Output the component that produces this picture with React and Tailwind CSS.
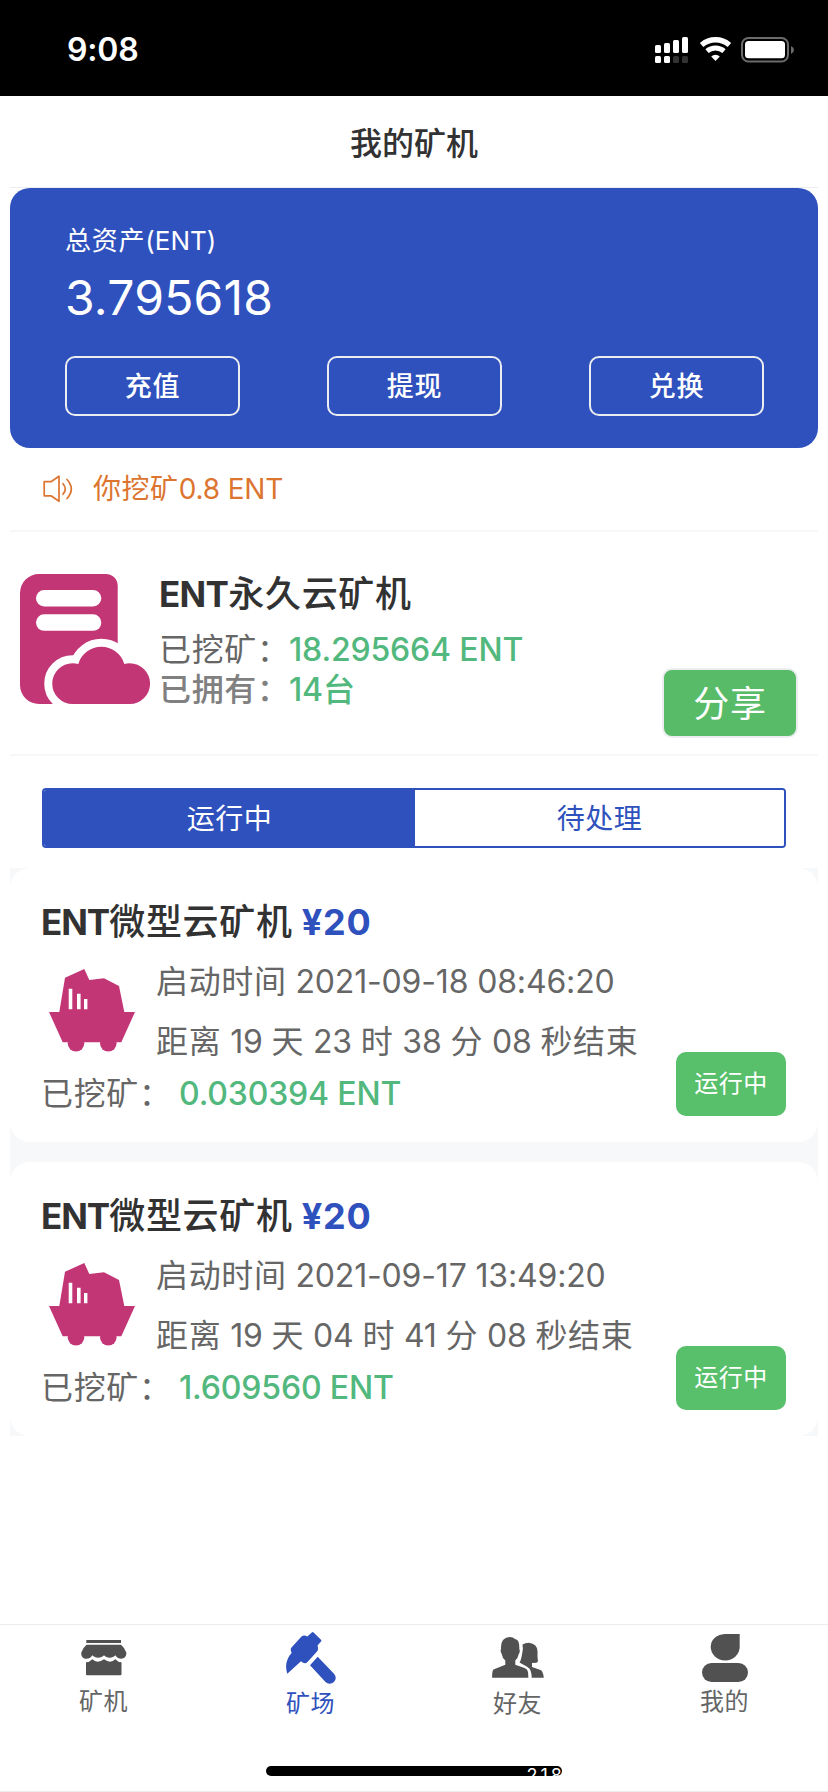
import React, { useState } from 'react';

const miners = [
  {
    id: 1,
    name: '微型云矿机',
    price: 20,
    startedAt: '2021-09-18 08:46:20',
    left: ['19', '23', '38', '08'],
    mined: '0.030394',
  },
  {
    id: 2,
    name: '微型云矿机',
    price: 20,
    startedAt: '2021-09-17 13:49:20',
    left: ['19', '04', '41', '08'],
    mined: '1.609560',
  },
];

// Chinese text is set slightly wider than the latin text next to it
const Zh = ({ children, className = '' }) => (
  <span className={`tracking-[0.02em] ${className}`}>{children}</span>
);

const StatusIcons = () => (
  <svg width="140" height="27" viewBox="0 0 140 27" fill="#fff">
    <rect x="0" y="8" width="6" height="8" rx="1.5" />
    <rect x="9" y="6" width="6" height="10" rx="1.5" />
    <rect x="18" y="3" width="6" height="13" rx="1.5" />
    <rect x="27" y="0" width="6" height="16" rx="1.5" />
    <rect x="0" y="19" width="6" height="7" rx="1.5" />
    <rect x="9" y="19" width="6" height="7" rx="1.5" />
    <rect x="18" y="19" width="6" height="7" rx="1.5" fill="#333" />
    <rect x="27" y="19" width="6" height="7" rx="1.5" fill="#333" />
    <path d="M46.6 8A21.2 21.2 0 0 1 74.4 8" fill="none" stroke="#fff" strokeWidth="5.4" />
    <path d="M52 14.2A13 13 0 0 1 69 14.2" fill="none" stroke="#fff" strokeWidth="5" />
    <path d="M60.5 24L56.2 19.4A6.3 6.3 0 0 1 64.8 19.4Z" />
    <rect x="87" y="1" width="46" height="23.5" rx="6.5" fill="none" stroke="#6b6b6b" strokeWidth="2" />
    <rect x="90" y="4" width="40" height="17.3" rx="3.5" />
    <path d="M136 9q3 1.5 3 4t-3 4z" fill="#6b6b6b" />
  </svg>
);

const SpeakerIcon = () => (
  <svg width="30" height="28" viewBox="0 0 30 28" fill="none" stroke="#dc7530" strokeWidth="1.7" strokeLinejoin="round" strokeLinecap="round">
    <path d="M1.2 6.7H8L16 1.2V26.3L8 20.8H1.2Z" />
    <path d="M20 8.7q4.6 5.3 0 10.6M24 4.5q8.6 9.5 0 19" />
  </svg>
);

const CloudServerIcon = () => (
  <svg width="130" height="130" viewBox="0 0 130 130" fill="#c33676">
    <path d="M19 0H86a11.7 11.7 0 0 1 11.7 12V130H19A19 19 0 0 1 0 111V19A19 19 0 0 1 19 0Z" />
    <rect x="16" y="16" width="65.3" height="16.5" rx="8.2" fill="#fff" />
    <rect x="16" y="40.3" width="65.3" height="16.5" rx="8.2" fill="#fff" />
    <path
      d="M52.6 130A20.3 20.3 0 0 1 52.6 89.3Q55.5 89.3 58.3 90A24 24 0 0 1 104.3 90Q107 89.3 109.7 89.3A20.3 20.3 0 0 1 109.7 130Z"
      stroke="#fff"
      strokeWidth="16"
    />
    <path d="M52.6 130A20.3 20.3 0 0 1 52.6 89.3Q55.5 89.3 58.3 90A24 24 0 0 1 104.3 90Q107 89.3 109.7 89.3A20.3 20.3 0 0 1 109.7 130Z" />
  </svg>
);

const MineCartIcon = () => (
  <svg width="86" height="83" viewBox="0 0 86 83" fill="#c33676">
    <path d="M35.3 0L40.3 11L55 9.3L70 17L75.3 43H86L72.3 73.3H13.7L0 43H10.3L16 8.7Z" />
    <circle cx="27" cy="74.3" r="8.3" />
    <circle cx="59.3" cy="74.3" r="8.3" />
    <path d="M19.7 19.7h3.6v20.6h-3.6zM28 24.7h3.6v15.6H28zM35 30h3.4v10.3H35z" fill="#fff" />
  </svg>
);

const StoreIcon = () => (
  <svg width="46" height="36" viewBox="0 0 46 36" fill="currentColor">
    <path d="M5.3 0H40V3H5.3z" />
    <path d="M5.5 4.7H40Q43 7 45.300 12.500C46 20 37.500 20.500 34.300 15.200C32 18.500 25.500 18.500 23 15.200C20.500 18.500 14 18.500 11.300 15.200C8.500 20.500 -.5 20 .3 12.500Q2.500 7 5.500 4.700Z" />
    <path d="M5 22.300Q8.500 22.300 11.300 19.300Q16.500 24 23 19.300Q29.500 24 34.300 19.300Q37 22.300 40.500 22.300V34.300a1 1 0 0 1-1 1H6a1 1 0 0 1-1-1z" />
  </svg>
);

const PickaxeIcon = () => (
  <svg width="50" height="52" viewBox="0 0 50 52" fill="currentColor">
    <path d="M25.800 0.600Q26.700-.4 27.600 0.600L35 7.800Q35.800 8.700 35 9.600L31.500 13.500Q32.800 17.500 31 19.500L21 30.500Q18.500 32.500 15 29.300L1.300 41.700Q-2.500 30 5.700 20.700Q3.800 17.500 5.500 15.500L15.500 4.500Q18 2.500 21.300 4.500Z" />
    <path d="M31.700 24.700L48 41.700A5.900 5.900 0 0 1 39.500 50L24 33.300Z" />
  </svg>
);

const FriendsIcon = () => (
  <svg width="52" height="41" viewBox="0 0 52 41" fill="currentColor">
    <path d="M18 0Q21 0 23 2Q27.700 2.500 27.300 12Q28.500 14.500 26.800 17Q26 21 23.300 23.500V27.700L32.500 31Q35.600 32 36 35L36.400 40.700H.1Q0 34 1.500 32.500L13.300 27.700V23.500Q10.300 21 9.700 17Q8 14.500 9 12Q8.300 0.500 18 0Z" />
    <path d="M30.500 7.500Q33 5.700 37 5.700Q45 6.700 45.500 14Q45.300 20 46 24.500L44.500 25.700L40 26V30L48.500 33Q51 34 51.800 40.700H39.700Q39.500 34 37.300 31.500Q35 29.500 31.500 27.800L27.500 25.500Q29 23.500 30 17.500Q31.600 12 30.500 7.500Z" />
  </svg>
);

const MeIcon = () => (
  <svg width="46" height="48" viewBox="0 0 46 48" fill="currentColor">
    <path d="M23 0H37.700V12.700A14.500 13.700 0 0 1 8.700 12.700Q9.200 1.500 23 0Z" />
    <rect x="0" y="29" width="46" height="19" rx="9.500" />
  </svg>
);

const tabs = [
  { label: '矿机', Icon: StoreIcon, iconBox: 'pt-[15px] h-[61px]' },
  { label: '矿场', Icon: PickaxeIcon, iconBox: 'pt-[7px] h-[63px]', active: true },
  { label: '好友', Icon: FriendsIcon, iconBox: 'pt-[12px] h-[63px]' },
  { label: '我的', Icon: MeIcon, iconBox: 'pt-[9px] h-[61px]' },
];

const MinerCard = ({ miner }) => {
  const [d, h, m, s] = miner.left;
  return (
    <div className="h-[274px] rounded-[20px] bg-white pl-[31px] pr-8 pt-[33px] flex justify-between text-[#666]">
      <div className="text-[32px] whitespace-nowrap">
        <h3 className="text-[36px] leading-[42px] font-bold text-[#323233]">
          <span className="text-[35px] tracking-[-0.03em]">ENT</span>
          <Zh className="font-medium">{miner.name}</Zh>
          <span className="ml-[9px] tracking-[0.02em] text-[#2f51bd]">¥{miner.price}</span>
        </h3>
        <div className="flex">
          <div className="w-[115px] pt-[26px] pl-2">
            <MineCartIcon />
          </div>
          <div className="pt-[9px] leading-[60px]">
            <p><Zh>启动时间</Zh> {miner.startedAt}</p>
            <p>
              <Zh>距离</Zh> {d} <Zh>天</Zh> {h} <Zh>时</Zh> {m} <Zh>分</Zh> {s} <Zh>秒结束</Zh>
            </p>
          </div>
        </div>
        <div className="flex leading-[44px]">
          <Zh className="w-[138px]">已挖矿：</Zh>
          <span className="font-medium text-[#52b87d]">{miner.mined} ENT</span>
        </div>
      </div>
      <button className="mt-[151px] h-16 w-[110px] rounded-[10px] bg-[#58bf6b] text-2xl text-white">
        <Zh>运行中</Zh>
      </button>
    </div>
  );
};

const App = () => {
  const [tab, setTab] = useState('running');
  const tabClass = (name) =>
    tab === name ? 'bg-[#2f51bd] text-white' : 'bg-white text-[#2f51bd]';

  return (
    <div className="w-[828px] h-[1792px] flex flex-col overflow-hidden bg-white font-['Inter','Noto_Sans_CJK_SC',sans-serif] tracking-[-0.01em] text-[#323233]">
      {/* Status bar */}
      <div className="h-24 shrink-0 bg-black text-white flex items-start justify-between pl-[67px] pr-[33px]">
        <span className="pt-[30px] text-[32px] leading-10 font-semibold">9:08</span>
        <div className="pt-[37px]">
          <StatusIcons />
        </div>
      </div>

      <div className="flex-1 px-2.5">
        <header className="h-[92px] border-b border-[#ebedf0] flex items-center justify-center text-[32px] font-medium pt-1">
          <Zh className="tracking-normal">我的矿机</Zh>
        </header>

        {/* Assets */}
        <section className="h-[260px] rounded-[20px] bg-[#2f51bd] text-white px-[55px] pt-[37px]">
          <p className="text-[26px] leading-8"><Zh className="tracking-[0.03em]">总资产</Zh><span className="tracking-normal">(ENT)</span></p>
          <p className="mt-[13px] text-[48px] leading-[56px] tracking-[0.005em]">3.795618</p>
          <div className="mt-[30px] flex justify-between w-[699px]">
            {['充值', '提现', '兑换'].map((label) => (
              <button key={label} className="h-[60px] w-[175px] rounded-[10px] border-2 border-[#ebedf0] pt-0.5 text-[27px] font-medium">
                <Zh className="tracking-[0.03em]">{label}</Zh>
              </button>
            ))}
          </div>
        </section>

        {/* Notice */}
        <div className="h-[84px] border-b-2 border-[#f7f7f9] pl-[33px] flex items-center gap-5 text-[28px] text-[#dc7530]">
          <SpeakerIcon />
          <p><Zh>你挖矿</Zh>0.8 ENT</p>
        </div>

        {/* Permanent miner */}
        <section className="h-[224px] border-b-2 border-[#f7f7f9] pl-2.5 pr-5 flex">
          <div className="pt-[42px]">
            <CloudServerIcon />
          </div>
          <div className="ml-[9px] pt-[41px] flex-1 text-[32px] leading-10 whitespace-nowrap">
            <h2 className="text-[36px] leading-[42px] font-bold">
              <span className="text-[35px] tracking-[-0.02em]">ENT</span>
              <Zh className="font-medium">永久云矿机</Zh>
            </h2>
            <div className="mt-[15px] flex text-[#666]">
              <Zh className="w-[130px]">已挖矿：</Zh>
              <span className="font-medium text-[#52b87d] tracking-[-0.005em]">18.295664 ENT</span>
            </div>
            <div className="flex text-[#808080] font-medium">
              <Zh className="w-[130px]">已拥有：</Zh>
              <span className="text-[#52b87d]">14<Zh>台</Zh></span>
            </div>
          </div>
          <button className="mt-[136px] h-[70px] w-[136px] rounded-[10px] border-2 border-[#ebedf0] bg-[#57bb68] pt-0.5 text-[36px] text-white">
            <Zh>分享</Zh>
          </button>
        </section>

        <div className="mt-8 mx-8 h-[60px] flex overflow-hidden rounded-[4px] border-2 border-[#2f51bd] text-[28px]">
          <button className={`w-[371px] pt-0.5 ${tabClass('running')}`} onClick={() => setTab('running')}><Zh>运行中</Zh></button>
          <button className={`flex-1 pt-0.5 ${tabClass('pending')}`} onClick={() => setTab('pending')}><Zh>待处理</Zh></button>
        </div>

        <div className="mt-5 flex flex-col gap-5 bg-[#f7f8fa]">
          {miners.map((miner) => (
            <MinerCard key={miner.id} miner={miner} />
          ))}
        </div>
      </div>

      {/* Bottom navigation */}
      <nav className="h-[168px] shrink-0 border-y border-[#ebedf0] flex flex-col items-center">
        <div className="flex w-full h-[141px]">
          {tabs.map(({ label, Icon, iconBox, active }) => (
            <div key={label} className={`flex-1 flex flex-col items-center text-2xl leading-8 ${active ? 'text-[#2f51bd]' : 'text-[#646566]'}`}>
              <div className={`${iconBox} ${active ? '' : 'text-[#515151]'}`}>
                <Icon />
              </div>
              <Zh>{label}</Zh>
            </div>
          ))}
        </div>
        <div className="h-2.5 w-[296px] rounded-full bg-black overflow-hidden flex justify-end text-white text-[18px] leading-5 tracking-[3px]">
          <span className="-mr-[3px]">218</span>
        </div>
      </nav>
    </div>
  );
};

export default App;
